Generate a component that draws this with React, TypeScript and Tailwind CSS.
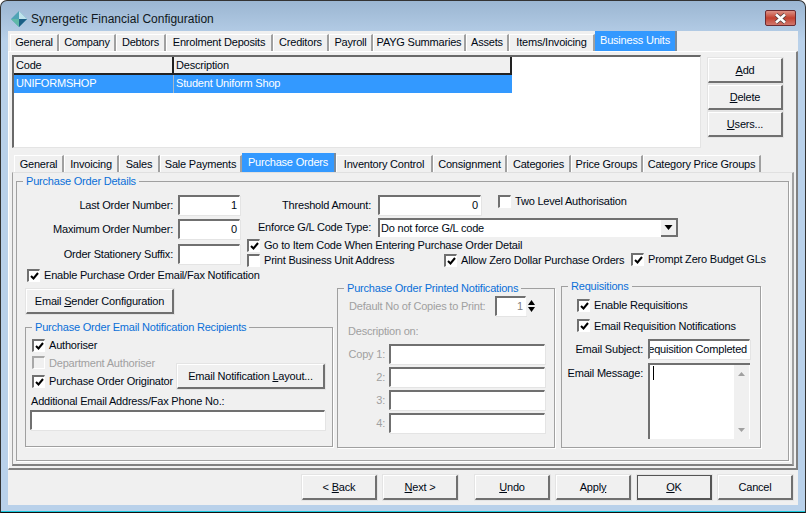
import React from "react";

const font = { fontFamily: '"Liberation Sans", Arial, sans-serif' };

function Tab({ label, w, selected, low }: { label: string; w: number; selected?: boolean; low?: boolean }) {
  if (selected) {
    return (
      <div
        className="bg-[#3399ff] text-white text-center h-full pt-[1px] border-r-2 border-r-[#7a8a9a] shrink-0 whitespace-nowrap"
        style={{ width: w }}
      >
        {label}
      </div>
    );
  }
  return (
    <div
      className={`bg-[#f0f0f0] text-center border-l border-l-white border-t border-t-white border-r-2 border-r-[#a0a0a0] shrink-0 self-end whitespace-nowrap h-[17px] ${low ? "leading-[17px]" : "leading-[15px]"}`}
      style={{ width: w }}
    >
      {label}
    </div>
  );
}

function Btn({ children, className = "" }: { children: React.ReactNode; className?: string }) {
  return (
    <div
      className={`h-[25px] flex items-center justify-center bg-[#f0f0f0] border-t border-l border-t-white border-l-white border-b-2 border-r-2 border-b-[#707070] border-r-[#707070] shadow-[0_0_0_1px_#e4e4e4] whitespace-nowrap shrink-0 ${className}`}
    >
      {children}
    </div>
  );
}

function Check({ label, checked, disabled, className = "" }: { label: string; checked?: boolean; disabled?: boolean; className?: string }) {
  return (
    <div className={`flex items-center whitespace-nowrap ${disabled ? "text-[#a0a0a0]" : ""} ${className}`}>
      <div className={`w-[13px] h-[13px] border-t-2 border-l-2 border-r border-b shrink-0 mr-[4px] flex items-center justify-center ${disabled ? "bg-[#f0f0f0] border-[#a8a8a8] border-r-white border-b-white" : "bg-white border-t-[#707070] border-l-[#707070] border-r-white border-b-white"}`}>
        {checked && (
          <svg width="9" height="8" viewBox="0 0 9 8">
            <path d="M1 4 L3.5 6.5 L8 1" fill="none" stroke="#000" strokeWidth="2" />
          </svg>
        )}
      </div>
      <span>{label}</span>
    </div>
  );
}

function Input({ value, className = "" }: { value?: string; className?: string }) {
  return (
    <div className={`bg-white border-t-2 border-l-2 border-t-[#707070] border-l-[#707070] border-r border-b border-r-white border-b-white shadow-[1px_1px_0_#e4e4e4] px-[2px] flex justify-end overflow-hidden whitespace-nowrap leading-[16px] shrink-0 ${className}`}>
      {value}
    </div>
  );
}

function Group({ title, className = "", children }: { title: string; className?: string; children: React.ReactNode }) {
  return (
    <div className={`relative border border-[#a0a0a0] shadow-[1px_1px_0_#ffffff] ${className}`}>
      <span className="absolute -top-[9px] left-[6px] bg-[#f0f0f0] px-[3px] text-[#0a6fd8] whitespace-nowrap leading-[16px]">{title}</span>
      {children}
    </div>
  );
}

function FormRow({ label, value, className = "" }: { label: string; value?: string; className?: string }) {
  return (
    <div className={`flex items-center ${className}`}>
      <span className="w-[148px] text-right whitespace-nowrap mr-[5px]">{label}</span>
      <Input value={value} className="w-[62px] h-[20px]" />
    </div>
  );
}

function CopyRow({ label, className = "" }: { label: string; className?: string }) {
  return (
    <div className={`flex items-center ${className}`}>
      <span className="w-[38px] text-right mr-[4px] text-[#a0a0a0] whitespace-nowrap">{label}</span>
      <Input className="w-[156px] h-[20px]" />
    </div>
  );
}

export default function App() {
  return (
    <div className="w-[806px] h-[513px] bg-white text-[11px] tracking-[-0.2px] text-[#000814] overflow-hidden" style={font}>
      <div className="w-full h-full rounded-t-[7px] border border-[#333] border-b-[#111] shadow-[inset_0_-1px_0_#19c8dc] bg-[#b9d1ea] bg-gradient-to-b from-[#9bb6d2] to-[#b9d1ea] bg-[length:100%_40px] bg-no-repeat flex flex-col">
        <div className="h-[30px] shrink-0 flex items-center pl-[9px] pt-[5px] relative">
          <svg width="18" height="18" viewBox="0 0 18 18" className="mr-[3px]">
            <polygon points="9,1 17,9 9,17 1,9" fill="#4fa3b5" />
            <polygon points="9,1 17,9 9,9" fill="#bfe3ec" />
            <polygon points="9,9 17,9 9,17" fill="#1c5f86" />
            <polygon points="1,9 9,9 9,17" fill="#5fb8a8" />
          </svg>
          <span className="text-[12px] tracking-normal text-[#101820]">Synergetic Financial Configuration</span>
          <div className="absolute right-[9px] top-[9px] w-[31px] h-[16px] rounded-[2px] border border-[#6b2a30] bg-gradient-to-b from-[#dc9186] via-[#c2402f] to-[#d0766c] flex items-center justify-center">
            <svg width="15" height="11" viewBox="0 0 15 11">
              <path d="M3 1.5 L12 9.5 M12 1.5 L3 9.5" stroke="#4a3a3a" strokeWidth="4" />
              <path d="M3 1.5 L12 9.5 M12 1.5 L3 9.5" stroke="#fff" strokeWidth="2.6" />
            </svg>
          </div>
        </div>

        <div className="ml-[7px] mr-[7px] mb-[7px] flex-1 bg-[#f0f0f0] flex flex-col min-h-0">
          <div className="h-[20px] flex items-end pl-[2px] shrink-0">
            <Tab label="General" w={49} />
            <Tab label="Company" w={57} />
            <Tab label="Debtors" w={50} />
            <Tab label="Enrolment Deposits" w={107} />
            <Tab label="Creditors" w={56} />
            <Tab label="Payroll" w={44} />
            <Tab label="PAYG Summaries" w={93} />
            <Tab label="Assets" w={43} />
            <Tab label="Items/Invoicing" w={86} />
            <Tab label="Business Units" w={82} selected />
          </div>

          <div className="h-[419px] shrink-0 border-t border-t-white border-l border-l-white border-r-2 border-b-2 border-r-[#808080] border-b-[#808080] px-[3px] pt-[3px]">
            <div className="flex h-[93px]">
              <div className="w-[689px] h-[93px] bg-white border-t-2 border-l-2 border-t-[#696969] border-l-[#696969] border-r border-b border-r-[#e4e4e4] border-b-[#e4e4e4] shrink-0">
                <div className="flex h-[18px] w-[498px] bg-[#f0f0f0] border-b-2 border-r-2 border-b-[#222] border-r-[#222]">
                  <div className="w-[160px] pl-[2px] border-r-2 border-r-[#222] leading-[16px]">Code</div>
                  <div className="flex-1 pl-[2px] leading-[16px]">Description</div>
                </div>
                <div className="flex h-[18px] w-[498px] bg-[#3399ff] text-white leading-[17px]">
                  <div className="w-[160px] pl-[2px] border-r border-r-[#a8b8c8]">UNIFORMSHOP</div>
                  <div className="flex-1 pl-[2px]">Student Uniform Shop</div>
                </div>
              </div>
              <div className="ml-[7px] pt-[3px] flex flex-col gap-[2px]">
                <Btn className="w-[75px]"><span><u>A</u>dd</span></Btn>
                <Btn className="w-[75px]"><span><u>D</u>elete</span></Btn>
                <Btn className="w-[75px]"><span><u>U</u>sers...</span></Btn>
              </div>
            </div>

            <div className="h-[19px] mt-[5px] flex items-end pl-[2px]">
              <Tab label="General" w={50} low />
              <Tab label="Invoicing" w={55} low />
              <Tab label="Sales" w={41} low />
              <Tab label="Sale Payments" w={82} low />
              <Tab label="Purchase Orders" w={94} selected />
              <Tab label="Inventory Control" w={97} low />
              <Tab label="Consignment" w={74} low />
              <Tab label="Categories" w={64} low />
              <Tab label="Price Groups" w={72} low />
              <Tab label="Category Price Groups" w={118} low />
            </div>

            <div className="h-[294px] w-[782px] border-t border-t-[#e0e0e0] border-l border-l-[#a0a0a0] border-r-2 border-b-2 border-r-[#a0a0a0] border-b-[#808080] pl-[3px] pt-[8px]">
              <Group title="Purchase Order Details" className="w-[773px] h-[280px] pl-[8px] pt-[13px]">
                <div className="flex h-[90px]">
                  <div className="w-[222px] shrink-0">
                    <FormRow label="Last Order Number:" value="1" />
                    <FormRow label="Maximum Order Number:" value="0" className="mt-[4px]" />
                    <FormRow label="Order Stationery Suffix:" className="mt-[5px]" />
                    <Check label="Enable Purchase Order Email/Fax Notification" checked className="ml-[2px] mt-[3px]" />
                  </div>
                  <div className="flex-1">
                    <div className="flex items-start h-[20px]">
                      <span className="w-[124px] text-right whitespace-nowrap mr-[7px] leading-[20px]">Threshold Amount:</span>
                      <Input value="0" className="w-[103px] h-[20px]" />
                      <Check label="Two Level Authorisation" className="ml-[17px] -mt-[2px]" />
                    </div>
                    <div className="flex items-center h-[19px] mt-[3px]">
                      <span className="w-[124px] text-right whitespace-nowrap mr-[7px]">Enforce G/L Code Type:</span>
                      <div className="relative w-[300px] h-[19px] bg-white border-t-2 border-l-2 border-t-[#707070] border-l-[#707070] pl-[1px] leading-[16px]">
                        Do not force G/L code
                        <div className="absolute right-0 top-0 w-[17px] h-[17px] bg-[#f0f0f0] border-r-2 border-b-2 border-r-[#707070] border-b-[#707070] flex items-center justify-center">
                          <svg width="9" height="5" viewBox="0 0 9 5"><path d="M0.5 0 L8.5 0 L4.5 5 Z" fill="#000" /></svg>
                        </div>
                      </div>
                    </div>
                    <Check label="Go to Item Code When Entering Purchase Order Detail" checked className="h-[13px] mt-[2px]" />
                    <div className="flex items-center h-[15px] mt-[1px]">
                      <Check label="Print Business Unit Address" className="w-[197px] shrink-0" />
                      <Check label="Allow Zero Dollar Purchase Orders" checked className="w-[187px] shrink-0" />
                      <Check label="Prompt Zero Budget GLs" checked className="-mt-[3px]" />
                    </div>
                  </div>
                </div>

                <div className="flex">
                  <div className="w-[312px] shrink-0">
                    <Btn className="w-[148px] ml-[1px] mt-[4px]"><span>Email <u>S</u>ender Configuration</span></Btn>
                    <Group title="Purchase Order Email Notification Recipients" className="w-[308px] h-[120px] mt-[13px] pl-[6px] pt-[9px]">
                      <Check label="Authoriser" checked />
                      <Check label="Department Authoriser" disabled className="mt-[1px]" />
                      <div className="flex items-start -mt-[7px]">
                        <Check label="Purchase Order Originator" checked className="w-[145px] shrink-0 mt-[9px]" />
                        <Btn className="w-[148px]"><span>Email Notification <u>L</u>ayout...</span></Btn>
                      </div>
                      <div className="mt-[3px] -ml-[1px] leading-[16px]">Additional Email Address/Fax Phone No.:</div>
                      <Input className="w-[295px] h-[20px] mt-[1px] -ml-[2px]" />
                    </Group>
                  </div>
                  <Group title="Purchase Order Printed  Notifications" className="w-[218px] h-[160px] pl-[10px] pt-[7px] mt-[3px] shrink-0">
                    <div className="flex items-center text-[#a0a0a0]">
                      <span className="w-[147px] whitespace-nowrap pl-[1px]">Default No of Copies to Print:</span>
                      <div className="flex h-[20px]">
                        <Input value="1" className="w-[31px] h-[20px] text-[#808080]" />
                        <div className="w-[11px] flex flex-col items-center justify-center gap-[2px] bg-[#f0f0f0]">
                          <svg width="7" height="5" viewBox="0 0 7 5"><path d="M0 5 L3.5 0 L7 5 Z" fill="#000" /></svg>
                          <svg width="7" height="5" viewBox="0 0 7 5"><path d="M0 0 L3.5 5 L7 0 Z" fill="#000" /></svg>
                        </div>
                      </div>
                    </div>
                    <div className="mt-[7px] text-[#a0a0a0] leading-[16px]">Description on:</div>
                    <CopyRow label="Copy 1:" className="mt-[5px] -ml-[1px]" />
                    <CopyRow label="2:" className="mt-[3px] -ml-[1px]" />
                    <CopyRow label="3:" className="mt-[3px] -ml-[1px]" />
                    <CopyRow label="4:" className="mt-[3px] -ml-[1px]" />
                  </Group>
                  <Group title="Requisitions" className="w-[200px] h-[162px] ml-[6px] mt-[1px] shrink-0 pl-[15px] pt-[10px]">
                    <Check label="Enable Requisitions" checked />
                    <Check label="Email Requisition Notifications" checked className="mt-[4px]" />
                    <div className="flex items-center mt-[5px] -ml-[15px]">
                      <span className="w-[81px] text-right mr-[5px] whitespace-nowrap">Email Subject:</span>
                      <Input value="Requisition Completed" className="w-[102px] h-[20px]" />
                    </div>
                    <div className="flex items-start mt-[4px] -ml-[15px]">
                      <span className="w-[81px] text-right mr-[5px] mt-[2px] whitespace-nowrap">Email Message:</span>
                      <div className="w-[102px] h-[76px] bg-white border-t-2 border-l-2 border-t-[#707070] border-l-[#707070] flex justify-between">
                        <div className="w-px h-[14px] bg-black ml-[3px] mt-[1px]" />
                        <div className="w-[16px] h-full bg-[#f0f0f0] border-r border-r-white flex flex-col items-center justify-between py-[7px]">
                          <svg width="7" height="4" viewBox="0 0 7 4"><path d="M0 4 L3.5 0 L7 4 Z" fill="#a0a0a0" /></svg>
                          <svg width="7" height="4" viewBox="0 0 7 4"><path d="M0 0 L3.5 4 L7 0 Z" fill="#a0a0a0" /></svg>
                        </div>
                      </div>
                    </div>
                  </Group>
                </div>
              </Group>
            </div>
          </div>

          <div className="flex pl-[294px] pt-[5px] gap-[6px]">
            <Btn className="w-[75px]"><span>&lt; <u>B</u>ack</span></Btn>
            <Btn className="w-[75px]"><span><u>N</u>ext &gt;</span></Btn>
            <Btn className="w-[75px] ml-[11px]"><span><u>U</u>ndo</span></Btn>
            <Btn className="w-[75px]"><span>Appl<u>y</u></span></Btn>
            <Btn className="w-[75px] !border !border-[#555] !border-b-2 !border-r-2"><span><u>O</u>K</span></Btn>
            <Btn className="w-[75px]"><span>Cancel</span></Btn>
          </div>
        </div>
      </div>
    </div>
  );
}
